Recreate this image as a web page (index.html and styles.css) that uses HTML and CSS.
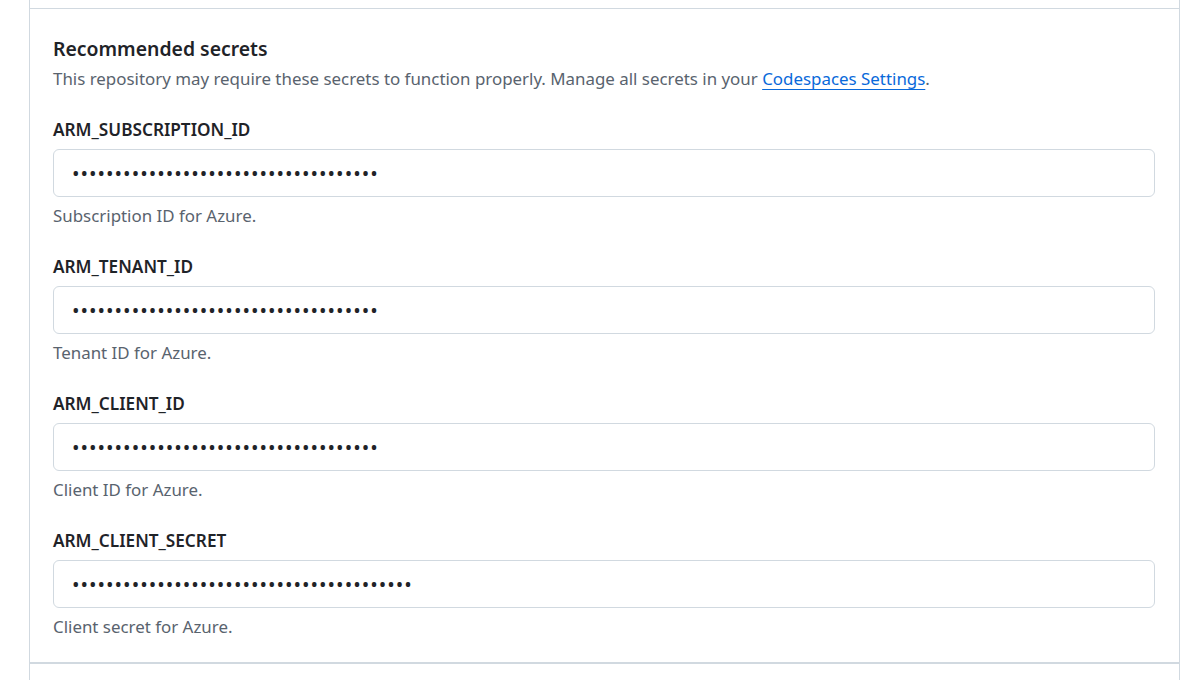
FILE: index.html
```html
<!DOCTYPE html>
<html lang="en">
<head>
<meta charset="utf-8">
<title>Recommended secrets</title>
<link rel="stylesheet" href="styles.css">
</head>
<body>
<div class="panel">
  <div class="panel-top"></div>
  <section class="secrets">
    <h2 class="secrets-title">Recommended secrets</h2>
    <p class="secrets-desc">This repository may require these secrets to function properly. Manage all secrets in your <a class="link" href="#">Codespaces Settings</a>.</p>

    <div class="field">
      <label class="field-label">ARM_SUBSCRIPTION_ID</label>
      <div class="field-input"><span class="mask">••••••••••••••••••••••••••••••••••••</span></div>
      <div class="field-help">Subscription ID for Azure.</div>
    </div>

    <div class="field">
      <label class="field-label">ARM_TENANT_ID</label>
      <div class="field-input"><span class="mask">••••••••••••••••••••••••••••••••••••</span></div>
      <div class="field-help">Tenant ID for Azure.</div>
    </div>

    <div class="field">
      <label class="field-label">ARM_CLIENT_ID</label>
      <div class="field-input"><span class="mask">••••••••••••••••••••••••••••••••••••</span></div>
      <div class="field-help">Client ID for Azure.</div>
    </div>

    <div class="field">
      <label class="field-label">ARM_CLIENT_SECRET</label>
      <div class="field-input"><span class="mask">••••••••••••••••••••••••••••••••••••••••</span></div>
      <div class="field-help">Client secret for Azure.</div>
    </div>
  </section>
  <div class="panel-bottom"></div>
</div>
</body>
</html>
```

FILE: styles.css
```css
* { box-sizing: border-box; }

html, body {
  margin: 0;
  padding: 0;
  background: #ffffff;
}

body {
  font-family: "Noto Sans", "Open Sans", sans-serif;
  color: #1f2328;
  height: 680px;
  overflow: hidden;
}

.panel {
  margin-left: 29px;
  width: 1151px;
  height: 680px;
  border-left: 1px solid #d1d9e0;
  border-right: 1px solid #d1d9e0;
  display: flex;
  flex-direction: column;
}

.panel-top {
  height: 9px;
  border-bottom: 1px solid #d1d9e0;
}

.secrets {
  padding: 26px 24px 23px 23px;
  border-bottom: 1px solid #d1d9e0;
}

.panel-bottom {
  border-top: 1px solid #d1d9e0;
  flex: 1;
}

.secrets-title {
  margin: 0;
  font-size: 19.4px;
  line-height: 28px;
  font-weight: 600;
  color: #1f2328;
}

.secrets-desc {
  margin: 4px 0 0;
  font-size: 16.9px;
  line-height: 24px;
  color: #59636e;
}

.link {
  color: #0969da;
  text-decoration: underline;
  text-decoration-thickness: 1px;
  text-underline-offset: 4px;
}

.field {
  margin-top: 27px;
}

.field-label {
  display: block;
  font-size: 17.2px;
  line-height: 24px;
  font-weight: 600;
  color: #1f2328;
}

.field-input {
  margin-top: 7px;
  height: 48px;
  border: 1px solid #d1d9e0;
  border-radius: 6px;
  background: #ffffff;
  display: flex;
  align-items: center;
  padding-left: 18px;
}

.mask {
  font-size: 20px;
  line-height: 1;
  letter-spacing: 1px;
  color: #1f2328;
  padding-top: 1px;
}

.field-help {
  margin-top: 7px;
  font-size: 16.9px;
  line-height: 24px;
  color: #59636e;
}
```
